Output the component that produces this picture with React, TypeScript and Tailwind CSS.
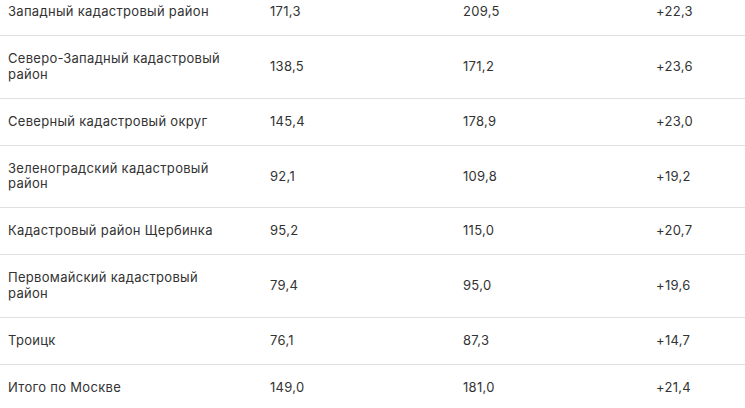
const rows = [
  ['Западный кадастровый район', '171,3', '209,5', '+22,3'],
  ['Северо-Западный кадастровый район', '138,5', '171,2', '+23,6'],
  ['Северный кадастровый округ', '145,4', '178,9', '+23,0'],
  ['Зеленоградский кадастровый район', '92,1', '109,8', '+19,2'],
  ['Кадастровый район Щербинка', '95,2', '115,0', '+20,7'],
  ['Первомайский кадастровый район', '79,4', '95,0', '+19,6'],
  ['Троицк', '76,1', '87,3', '+14,7'],
  ['Итого по Москве', '149,0', '181,0', '+21,4'],
];

export default function App() {
  return (
    <div className="h-[408px] w-[745px] overflow-hidden bg-white font-['Inter',sans-serif] text-[13px] leading-[15.5px] tracking-[0.3px] text-[#333]">
      <table className="-mt-[11px] w-full table-fixed border-collapse">
        <colgroup>
          <col className="w-[262px]" />
          <col className="w-[193px]" />
          <col className="w-[193px]" />
          <col />
        </colgroup>
        <tbody>
          {rows.map((r, i) => (
            <tr key={i} className="border-b border-[#e0e0e0] last:border-b-0">
              <td className="py-[15.25px] pl-2 pr-[40px] align-middle">{r[0]}</td>
              <td className="py-[15.25px] px-2 align-middle">{r[1]}</td>
              <td className="py-[15.25px] px-2 align-middle">{r[2]}</td>
              <td className="py-[15.25px] px-2 align-middle">{r[3]}</td>
            </tr>
          ))}
        </tbody>
      </table>
    </div>
  );
}
